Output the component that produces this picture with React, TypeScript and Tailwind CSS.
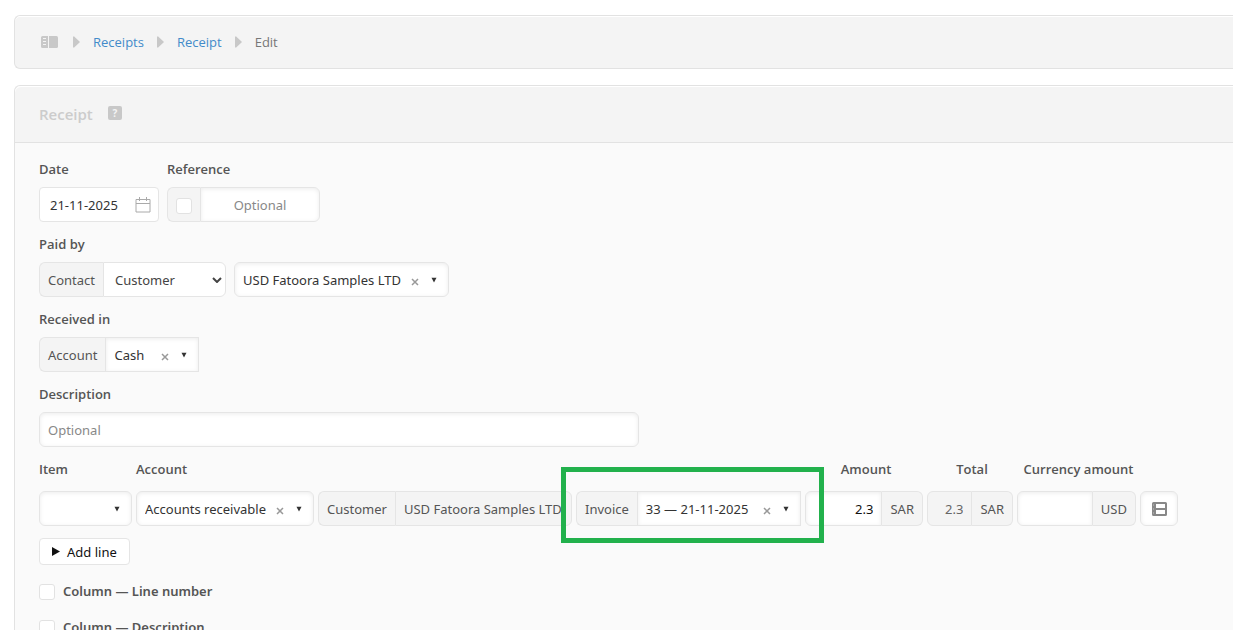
import type { ReactNode } from "react";
import clsx from "clsx";

const FIELD_SHADOW = "shadow-[inset_0_1px_4px_rgba(0,0,0,0.08)]";

interface PickerProps {
  id: string;
  label?: string;
  value: string;
  clearable?: boolean;
  className?: string;
}

function Picker({ id, label, value, clearable = true, className }: PickerProps) {
  return (
    <div
      className={clsx(
        "flex h-[35px] items-center border border-[#e5e5e5] bg-white pr-[11px] pl-2",
        FIELD_SHADOW,
        className
      )}
    >
      <select
        id={id}
        aria-label={label}
        defaultValue={value}
        className="min-w-0 flex-1 appearance-none bg-transparent text-[#333] outline-none"
      >
        <option value={value}>{value}</option>
      </select>
      {clearable && (
        <button type="button" aria-label="Clear" className="mr-3 flex h-4 w-2 items-center">
          <svg viewBox="0 0 8 8" className="mt-1 h-2 w-2" stroke="#999" strokeWidth="1.5">
            <path d="M1 1l6 6M7 1l-6 6" />
          </svg>
        </button>
      )}
      <svg viewBox="0 0 6 6" className="h-[6px] w-[6px]" fill="#333">
        <path d="M0.5 0.800h5L3 5.500z" />
      </svg>
    </div>
  );
}

function Addon({ side = "left", children }: { side?: "left" | "right"; children: ReactNode }) {
  return (
    <span
      className={clsx(
        "flex h-[35px] shrink-0 items-center border border-[#e5e5e5] bg-[#f4f4f4] px-2 text-[#555]",
        side === "left" ? "rounded-l-md border-r-0" : "rounded-r-md border-l-0"
      )}
    >
      {children}
    </span>
  );
}

function Checkbox({ id, label }: { id: string; label?: string }) {
  return (
    <input
      id={id}
      type="checkbox"
      aria-label={label}
      className="mt-[2px] h-4 w-4 shrink-0 appearance-none rounded-[3px] border border-[#e2e2e2] bg-white"
    />
  );
}

function Label({ htmlFor, children }: { htmlFor: string; children: ReactNode }) {
  return (
    <label
      htmlFor={htmlFor}
      className="mb-2 block w-fit font-['Open_Sans',sans-serif] text-[13px] leading-5 font-semibold text-[#555]"
    >
      {children}
    </label>
  );
}

function Crumb() {
  return (
    <svg viewBox="0 0 7 12" className="h-3 w-[7px] shrink-0" fill="#c8c8c8">
      <path d="M0 0.5h1.2L7 6l-5.8 5.5H0z" />
    </svg>
  );
}

function SidebarIcon() {
  return (
    <svg viewBox="0 0 17 12" className="h-3 w-[17px]" fill="#c8c8c8">
      <path
        fillRule="evenodd"
        d="M1.5 0H7v12H1.5A1.5 1.5 0 0 1 0 10.500V1.500A1.5 1.5 0 0 1 1.5 0zM2 2v1h3V2zM2 5v1h3V5zM2 8v1h3V8z"
      />
      <path d="M8 0h7.500A1.5 1.5 0 0 1 17 1.500v9a1.5 1.5 0 0 1-1.500 1.500H8z" />
    </svg>
  );
}

function LineOptionsIcon() {
  return (
    <svg viewBox="0 0 15 14" className="h-[14px] w-[15px]" fill="#888">
      <path
        fillRule="evenodd"
        d="M1.500 0h12A1.500 1.500 0 0 1 15 1.500v11a1.500 1.500 0 0 1-1.500 1.500h-12A1.500 1.500 0 0 1 0 12.500v-11A1.500 1.500 0 0 1 1.500 0zM4 2v4h9V2zM4 8v4h9V8z"
      />
      <path d="M1 2h1v2H1zM1 6h1v2H1zM1 10h1v2H1z" fill="#a5a5a5" />
    </svg>
  );
}

function CalendarIcon() {
  return (
    <svg viewBox="0 0 16 16" className="h-4 w-4 shrink-0" fill="none" stroke="#aaa">
      <path d="M1 2.500h14v12.500H1zM1 6.500h14" />
      <path d="M4.500 0v4M11.500 0v4" />
    </svg>
  );
}

function LinesTable() {
  const th = "pb-3 font-['Open_Sans',sans-serif] text-[13px] leading-5 font-semibold text-[#555]";
  const td = "p-0 pr-1";
  const input = "h-[35px] rounded-l-md border border-[#e5e5e5] px-2 text-right outline-none";

  return (
    <table className="border-collapse">
      <thead>
        <tr>
          <th className={clsx(th, "text-left")}>Item</th>
          <th className={clsx(th, "text-left")} colSpan={3}>Account</th>
          <th className={th}>Amount</th>
          <th className={th}>Total</th>
          <th className={th}>Currency amount</th>
          <th className={th} />
        </tr>
      </thead>
      <tbody>
        <tr>
          <td className={td}>
            <Picker id="item" label="Item" value="" clearable={false} className="w-[93px] rounded-md" />
          </td>
          <td className={td}>
            <Picker id="line-account" label="Account" value="Accounts receivable" className="w-[178px] rounded-md" />
          </td>
          <td className={td}>
            <div className="flex w-[254px]">
              <Addon>Customer</Addon>
              <span className="flex h-[35px] min-w-0 flex-1 items-center rounded-r-md border border-[#e5e5e5] bg-[#f4f4f4] pl-2 whitespace-nowrap text-[#555]">
                USD Fatoora Samples LTD
              </span>
            </div>
          </td>
          <td className={td}>
            <div className="relative flex w-[225px]">
              <Addon>Invoice</Addon>
              <Picker id="invoice" label="Invoice" value="33 — 21-11-2025" className="min-w-0 flex-1" />
              {/* Highlight frame */}
              <div className="pointer-events-none absolute -top-6 -right-[23px] -bottom-[17px] -left-[15px] z-10 border-5 border-[#22b14c]" />
            </div>
          </td>
          <td className={td}>
            <div className="flex w-[118px]">
              <input aria-label="Amount" defaultValue="2.3" className={clsx(input, FIELD_SHADOW, "min-w-0 flex-1 bg-white text-[#111]")} />
              <Addon side="right">SAR</Addon>
            </div>
          </td>
          <td className={td}>
            <div className="flex w-[86px]">
              <input aria-label="Total" readOnly value="2.3" className={clsx(input, "min-w-0 flex-1 bg-[#f4f4f4] text-[#666]")} />
              <Addon side="right">SAR</Addon>
            </div>
          </td>
          <td className={td}>
            <div className="flex w-[119px]">
              <input aria-label="Currency amount" className={clsx(input, FIELD_SHADOW, "min-w-0 flex-1 bg-white")} />
              <Addon side="right">USD</Addon>
            </div>
          </td>
          <td className="p-0">
            <button
              type="button"
              aria-label="Line options"
              className={clsx("flex h-[35px] w-[38px] items-center justify-center rounded-md border border-[#e5e5e5] bg-white", FIELD_SHADOW)}
            >
              <LineOptionsIcon />
            </button>
          </td>
        </tr>
      </tbody>
    </table>
  );
}

export default function App() {
  return (
    <div className="h-screen overflow-y-auto bg-white pt-[15px] pl-[14px] font-['Open_Sans',sans-serif] text-[13px] leading-5 text-[#333] [scrollbar-width:none]">
      <nav
        aria-label="Breadcrumb"
        className="flex h-[54px] items-center gap-[13px] rounded-l-md border border-r-0 border-[#e2e2e2] bg-[#f4f4f4] pl-[26px] shadow-[inset_0_1px_0_#fff]"
      >
        <a href="#home" aria-label="Home" className="mr-[2px]"><SidebarIcon /></a>
        <Crumb />
        <a href="#receipts" className="text-[#428bca]">Receipts</a>
        <Crumb />
        <a href="#receipt" className="text-[#428bca]">Receipt</a>
        <Crumb />
        <span className="text-[#777]">Edit</span>
      </nav>

      <form className="mt-4 rounded-l-md border border-r-0 border-[#e2e2e2] bg-[#fafafa]">
        <header className="flex h-[57px] items-center gap-[15px] rounded-tl-md border-b border-[#e2e2e2] bg-[#f4f4f4] pl-6 shadow-[inset_0_1px_0_#fff]">
          <h1 className="text-[15px] font-semibold text-[#ccc]">Receipt</h1>
          <a
            href="#help"
            aria-label="Help"
            className="mb-[2px] flex h-[14px] w-[14px] items-center justify-center rounded-[2px] bg-[#c8c8c8] text-[10px] leading-none font-bold text-[#f4f4f4]"
          >
            ?
          </a>
        </header>

        <div className="px-6 pt-4 pb-6 font-['Noto_Sans',sans-serif]">
          <div className="flex gap-2">
            <div>
              <Label htmlFor="date">Date</Label>
              <div className="flex h-[35px] w-[120px] items-center rounded-[4px] border border-[#e5e5e5] bg-white pr-[7px] pl-[10px]">
                <input id="date" defaultValue="21-11-2025" className="min-w-0 flex-1 outline-none" />
                <CalendarIcon />
              </div>
            </div>
            <div>
              <Label htmlFor="reference">Reference</Label>
              <div className="flex w-[153px]">
                <Addon><Checkbox id="auto-reference" label="Automatic reference" /></Addon>
                <input
                  id="reference"
                  placeholder="Optional"
                  className={clsx("h-[35px] min-w-0 flex-1 rounded-r-md border border-[#e5e5e5] bg-white text-center outline-none placeholder:text-[#888]", FIELD_SHADOW)}
                />
              </div>
            </div>
          </div>

          <div className="mt-3">
            <Label htmlFor="payer-type">Paid by</Label>
            <div className="flex gap-2">
              <div className="flex w-[187px]">
                <Addon>Contact</Addon>
                <div className="flex h-[35px] min-w-0 flex-1 items-center rounded-r-md border border-[#e5e5e5] bg-white pr-[3px] pl-[11px]">
                  <select id="payer-type" className="min-w-0 flex-1 appearance-none text-[#444] outline-none">
                    <option>Customer</option>
                    <option>Supplier</option>
                  </select>
                  <svg viewBox="0 0 10 6" className="h-[6px] w-[10px]" fill="none" stroke="#444" strokeWidth="2">
                    <path d="M1 1l4 4 4-4" />
                  </svg>
                </div>
              </div>
              <Picker id="payer" label="Contact" value="USD Fatoora Samples LTD" className="w-[215px] rounded-md" />
            </div>
          </div>

          <div className="mt-3">
            <Label htmlFor="received-in">Received in</Label>
            <div className="flex w-[160px]">
              <Addon>Account</Addon>
              <Picker id="received-in" value="Cash" className="min-w-0 flex-1" />
            </div>
          </div>

          <div className="mt-3 mb-3">
            <Label htmlFor="description">Description</Label>
            <input
              id="description"
              placeholder="Optional"
              className={clsx("block h-[35px] w-full max-w-[600px] rounded-md border border-[#e5e5e5] bg-white px-2 outline-none placeholder:text-[#888]", FIELD_SHADOW)}
            />
          </div>

          <LinesTable />

          <button
            type="button"
            className="mt-3 flex h-[27px] items-center gap-[7px] rounded-[4px] border border-[#e5e5e5] bg-white px-3 text-[#111]"
          >
            <svg viewBox="0 0 8 9" className="h-[9px] w-2" fill="#111">
              <path d="M0 0l8 4.500L0 9z" />
            </svg>
            Add line
          </button>

          <div className="mt-4 flex flex-col gap-4 font-semibold text-[#555]">
            <div className="flex items-center gap-2">
              <Checkbox id="column-line-number" />
              <label htmlFor="column-line-number">Column — Line number</label>
            </div>
            <div className="flex items-center gap-2">
              <Checkbox id="column-description" />
              <label htmlFor="column-description">Column — Description</label>
            </div>
          </div>
        </div>
      </form>
    </div>
  );
}
